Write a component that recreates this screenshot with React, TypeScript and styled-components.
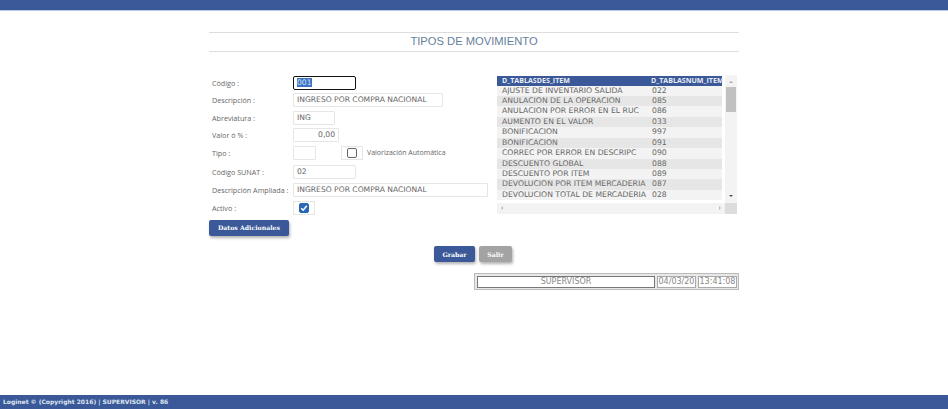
import styled, { createGlobalStyle } from "styled-components";

const GlobalStyle = createGlobalStyle`
  html, body {
    margin: 0;
    padding: 0;
    background: #fff;
  }
  * {
    box-sizing: border-box;
  }
`;

const Page = styled.div`
  display: flex;
  flex-direction: column;
  height: 409px;
  font-family: "DejaVu Sans", sans-serif;
  font-size: 8px;
  color: #555;
  overflow: hidden;
`;
const TopBar = styled.div`
  height: 11px;
  background: #3b5998;
  border-bottom: 1px solid #b9cbe6;
`;
const Main = styled.div`
  flex: 1;
  width: 530px;
  margin-left: 209px;
  padding-top: 21px;
`;
const Title = styled.div`
  height: 20px;
  border-top: 1px solid #ddd;
  border-bottom: 1px solid #ddd;
  text-align: center;
  font-family: "Liberation Sans", sans-serif;
  font-size: 11.2px;
  line-height: 17px;
  color: #66809c;
`;
const Panel = styled.div`
  display: flex;
  align-items: flex-start;
  margin-top: 22px;
`;
const Form = styled.div`
  width: 288px;
  display: flex;
  flex-direction: column;
`;
const Row = styled.div<{ $h?: number }>`
  display: flex;
  align-items: center;
  height: ${(p) => p.$h ?? 17.5}px;
`;
const Label = styled.label`
  width: 84px;
  padding-left: 3px;
  font-family: "Open Sans", sans-serif;
  font-size: 7.2px;
  white-space: nowrap;
  color: #666;
`;
const Field = styled.div<{ $w: number; $right?: boolean; $focus?: boolean }>`
  width: ${(p) => p.$w}px;
  height: 14px;
  flex: none;
  padding: 0 3px;
  border: 1px solid ${(p) => (p.$focus ? "#111" : "#e6e6e6")};
  border-radius: ${(p) => (p.$focus ? 2 : 1)}px;
  text-align: ${(p) => (p.$right ? "right" : "left")};
  font-size: 7.6px;
  line-height: 12px;
  white-space: nowrap;
  color: #666;
`;
const Selected = styled.span`
  background: #3d74c4;
  color: #cfe0f5;
`;
const CheckWrap = styled.div<{ $ml?: number; $w: number }>`
  width: ${(p) => p.$w}px;
  height: 14px;
  margin-left: ${(p) => p.$ml ?? 0}px;
  border: 1px solid #e6e6e6;
  display: flex;
  align-items: center;
  justify-content: center;
  flex: none;
`;
const Box = styled.span<{ $checked?: boolean }>`
  width: 10px;
  height: 10px;
  border-radius: 2px;
  border: 1px solid ${(p) => (p.$checked ? "#2a66b8" : "#666")};
  background: ${(p) => (p.$checked ? "#2a66b8" : "#fff")};
  display: flex;
  align-items: center;
  justify-content: center;
`;
const AutoLabel = styled.span`
  margin-left: 4px;
  font-family: "Open Sans", sans-serif;
  font-size: 7px;
  white-space: nowrap;
  color: #666;
`;
const Btn = styled.button<{ $bg: string; $w: number }>`
  width: ${(p) => p.$w}px;
  height: 16px;
  padding: 0;
  border: 0;
  border-radius: 2px;
  background: ${(p) => p.$bg};
  box-shadow: 1px 2px 3px rgba(0, 0, 0, 0.3);
  color: #fff;
  font-family: "DejaVu Serif", serif;
  font-size: 6.2px;
  font-weight: 700;
`;
const Extra = styled.div`
  margin-top: 3px;
`;
const GridBox = styled.div`
  margin-top: 1px;
  width: 240px;
  height: 139px;
  display: grid;
  grid-template-columns: 228px 12px;
  grid-template-rows: 128px 11px;
  background: #f7f7f7;
`;
const List = styled.div`
  overflow: hidden;
  background: #fff;
`;
const HeadRow = styled.div`
  display: grid;
  grid-template-columns: 149px 71px;
  width: 225px;
  height: 9.5px;
  margin-top: 1px;
  padding-left: 5px;
  background: #3b5998;
  color: #e8edf6;
  font-family: "Open Sans", sans-serif;
  font-size: 7.1px;
  font-weight: 700;
  line-height: 9.5px;
  white-space: nowrap;
`;
const ItemRow = styled.div<{ $odd: boolean }>`
  display: grid;
  grid-template-columns: 150px 70px;
  width: 225px;
  height: 10.45px;
  padding-left: 5px;
  background: ${(p) => (p.$odd ? "#e6e6e6" : "#f3f3f3")};
  font-size: 7.7px;
  line-height: 10.45px;
  white-space: nowrap;
  color: #666;
`;
const VScroll = styled.div`
  position: relative;
  background: #f3f3f3;
`;
const Thumb = styled.div`
  position: absolute;
  left: 1px;
  top: 12px;
  width: 10px;
  height: 25px;
  background: #c1c1c1;
`;
const Arrow = styled.div<{ $dir: "up" | "down" | "left" | "right"; $c?: string }>`
  position: absolute;
  width: 0;
  height: 0;
  border: 2.5px solid transparent;
  ${(p) => {
    const c = p.$c ?? "#505050";
    if (p.$dir === "up") return `border-bottom-color:${c};border-top:0;top:6px;left:3.5px;`;
    if (p.$dir === "down") return `border-top-color:${c};border-bottom:0;bottom:6px;left:3.5px;`;
    if (p.$dir === "left") return `border-right-color:${c};border-left:0;left:4px;top:3px;`;
    return `border-left-color:${c};border-right:0;right:4px;top:3px;`;
  }}
`;
const HScroll = styled.div`
  position: relative;
  background: #f3f3f3;
`;
const Corner = styled.div`
  background: #dcdcdc;
`;
const Actions = styled.div`
  display: flex;
  gap: 4px;
  margin-top: 10.5px;
  padding-left: 225px;
`;
const StatusBar = styled.div`
  display: grid;
  grid-template-columns: 178px 39px 39px;
  gap: 2px;
  width: 265px;
  height: 17px;
  margin-top: 11px;
  margin-left: 265px;
  padding: 2px;
  border: 1px solid #bbb;
  background: #e8e8e8;
`;
const Cell = styled.div<{ $dark?: boolean }>`
  border: 1px solid ${(p) => (p.$dark ? "#777" : "#aaa")};
  background: #fff;
  text-align: center;
  font-size: 8px;
  line-height: 10px;
  color: #888;
  white-space: nowrap;
`;
const Footer = styled.div`
  height: 14px;
  padding-left: 3px;
  background: #3b5998;
  color: #dfe5f2;
  font-size: 6px;
  font-weight: 700;
  line-height: 14px;
`;

const items: [string, string][] = [
  ["AJUSTE DE INVENTARIO SALIDA", "022"],
  ["ANULACION DE LA OPERACION", "085"],
  ["ANULACION POR ERROR EN EL RUC", "086"],
  ["AUMENTO EN EL VALOR", "033"],
  ["BONIFICACION", "997"],
  ["BONIFICACION", "091"],
  ["CORREC POR ERROR EN DESCRIPC", "090"],
  ["DESCUENTO GLOBAL", "088"],
  ["DESCUENTO POR ITEM", "089"],
  ["DEVOLUCION POR ITEM MERCADERIA", "087"],
  ["DEVOLUCION TOTAL DE MERCADERIA", "028"],
];

export default function App() {
  return (
    <Page>
      <GlobalStyle />
      <TopBar />
      <Main>
        <Title>TIPOS DE MOVIMIENTO</Title>
        <Panel>
          <Form>
            <Row>
              <Label>Código :</Label>
              <Field $w={63} $focus>
                <Selected>001</Selected>
              </Field>
            </Row>
            <Row>
              <Label>Descripción :</Label>
              <Field $w={150}>INGRESO POR COMPRA NACIONAL</Field>
            </Row>
            <Row>
              <Label>Abreviatura :</Label>
              <Field $w={42}>ING</Field>
            </Row>
            <Row>
              <Label>Valor ó % :</Label>
              <Field $w={46} $right>0,00</Field>
            </Row>
            <Row>
              <Label>Tipo :</Label>
              <Field $w={23} />
              <CheckWrap $ml={25} $w={22}>
                <Box />
              </CheckWrap>
              <AutoLabel>Valorización Automática</AutoLabel>
            </Row>
            <Row $h={20}>
              <Label>Código SUNAT :</Label>
              <Field $w={63}>02</Field>
            </Row>
            <Row>
              <Label>Descripción Ampliada :</Label>
              <Field $w={195}>INGRESO POR COMPRA NACIONAL</Field>
            </Row>
            <Row>
              <Label>Activo :</Label>
              <CheckWrap $w={22}>
                <Box $checked>
                  <svg width="8" height="8" viewBox="0 0 8 8">
                    <path d="M1.2 4.2 3.2 6.2 6.8 1.8" fill="none" stroke="#fff" strokeWidth="1.5" />
                  </svg>
                </Box>
              </CheckWrap>
            </Row>
            <Extra>
              <Btn $bg="#3b5998" $w={80}>Datos Adicionales</Btn>
            </Extra>
          </Form>
          <GridBox>
            <List>
              <HeadRow>
                <span>D_TABLASDES_ITEM</span>
                <span>D_TABLASNUM_ITEM</span>
              </HeadRow>
              {items.map(([name, code]: [string, string], i: number) => (
                <ItemRow key={code} $odd={i % 2 === 1}>
                  <span>{name}</span>
                  <span>{code}</span>
                </ItemRow>
              ))}
            </List>
            <VScroll>
              <Arrow $dir="up" $c="#aaa" />
              <Thumb />
              <Arrow $dir="down" />
            </VScroll>
            <HScroll>
              <Arrow $dir="left" $c="#bbb" />
              <Arrow $dir="right" $c="#bbb" />
            </HScroll>
            <Corner />
          </GridBox>
        </Panel>
        <Actions>
          <Btn $bg="#3b5998" $w={41}>Grabar</Btn>
          <Btn $bg="#a3a3a3" $w={33}>Salir</Btn>
        </Actions>
        <StatusBar>
          <Cell $dark>SUPERVISOR</Cell>
          <Cell>04/03/20</Cell>
          <Cell>13:41:08</Cell>
        </StatusBar>
      </Main>
      <Footer>Loginet © (Copyright 2016) | SUPERVISOR | v. 86</Footer>
    </Page>
  );
}
